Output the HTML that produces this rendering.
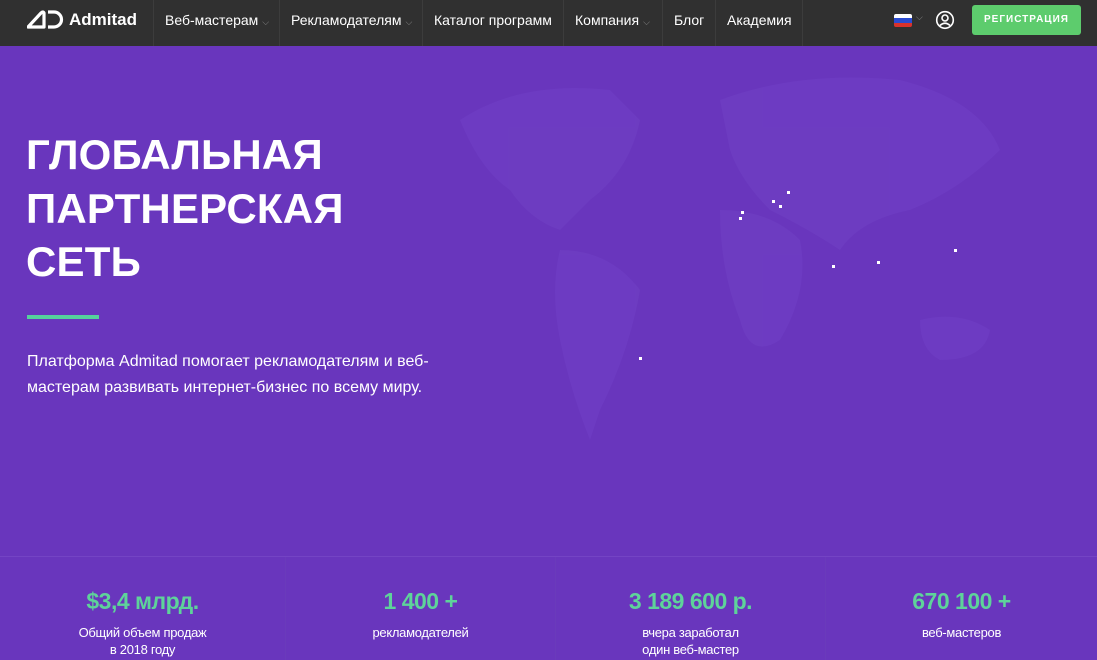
<!DOCTYPE html>
<html><head><meta charset="utf-8"><style>
*{margin:0;padding:0;box-sizing:border-box}
body{width:1097px;height:659px;overflow:hidden;background:#6936bd;font-family:"Liberation Sans","Noto Sans CJK SC",sans-serif;position:relative}
.nav{position:absolute;top:0;left:0;width:1097px;height:46px;background:#303030;color:#fff}
.nav .it{position:absolute;top:0;height:46px;line-height:40px;font-size:14px;border-left:1px solid #3c3c3c;padding-left:11px}
.chev{color:#888;font-size:9px;margin-left:4px}
.logo{position:absolute;left:27px;top:9px;font-weight:bold;font-size:17px;line-height:22px}
.btn{position:absolute;left:972px;top:5px;width:109px;height:30px;background:#5dcc6d;border-radius:3px;color:#fff;font-size:10px;font-weight:bold;letter-spacing:1px;text-align:center;line-height:30px}
h1{position:absolute;left:26px;top:128px;color:#fff;font-size:42px;line-height:53.5px;font-weight:bold;letter-spacing:0.2px}
.bar{position:absolute;left:27px;top:315px;width:72px;height:4px;background:#55d19c}
p.d{position:absolute;left:27px;top:349px;color:#fff;font-size:16px;line-height:26px;width:420px}
.stats{position:absolute;top:556px;left:0;width:1097px;height:103px;border-top:1px solid #7444c4}
.st{position:absolute;top:0;height:103px;text-align:center;border-left:1px solid #6a3bbb}
.st b{display:block;margin-top:29px;color:#5ed39a;font-size:23px;line-height:30px;letter-spacing:-0.5px}
.st span{display:block;margin-top:8px;color:#fff;font-size:13px;line-height:17px;letter-spacing:-0.3px}
.dot{position:absolute;width:3px;height:3px;background:#fff}
</style></head><body>
<svg style="position:absolute;left:440px;top:60px" width="580" height="400" viewBox="0 0 580 400">
<g fill="#7040c4" opacity="0.6">
<path d="M20 60 Q80 20 170 30 L200 60 Q190 110 150 140 L120 170 Q90 160 70 130 Q40 110 20 60Z"/>
<path d="M120 190 Q170 190 200 230 Q190 290 160 350 L150 380 Q130 330 120 280 Q110 230 120 190Z"/>
<path d="M280 40 Q360 10 460 20 Q540 40 560 90 Q520 130 470 150 Q420 160 400 190 Q370 170 330 150 Q300 120 290 90Z"/>
<path d="M280 150 Q330 150 360 180 Q370 230 340 280 Q310 300 300 260 Q280 210 280 150Z"/>
<path d="M480 260 Q520 250 550 270 Q545 300 500 300 Q480 290 480 260Z"/>
</g></svg>
<div class="dot" style="left:787px;top:191px"></div>
<div class="dot" style="left:772px;top:200px"></div>
<div class="dot" style="left:779px;top:205px"></div>
<div class="dot" style="left:741px;top:211px"></div>
<div class="dot" style="left:739px;top:217px"></div>
<div class="dot" style="left:954px;top:249px"></div>
<div class="dot" style="left:877px;top:261px"></div>
<div class="dot" style="left:832px;top:265px"></div>
<div class="dot" style="left:639px;top:357px"></div>
<div class="nav">
<div class="logo"><svg width="38" height="20" viewBox="0 0 38 20" style="vertical-align:-4px;margin-right:4px"><path d="M1 18 L14 4 Q16 2 17 4 L17 18 Z" fill="none" stroke="#fff" stroke-width="3.2" stroke-linejoin="round"/><path d="M21 3 L27 3 A7.5 7.5 0 0 1 27 18 L21 18" fill="none" stroke="#fff" stroke-width="3.2"/></svg>Admitad</div>
<div class="it" style="left:153px;width:126px">Веб-мастерам<span class="chev">⌵</span></div>
<div class="it" style="left:279px;width:143px">Рекламодателям<span class="chev">⌵</span></div>
<div class="it" style="left:422px;width:141px">Каталог программ</div>
<div class="it" style="left:563px;width:99px">Компания<span class="chev">⌵</span></div>
<div class="it" style="left:662px;width:53px">Блог</div>
<div class="it" style="left:715px;width:88px;border-right:1px solid #3c3c3c">Академия</div>
<div style="position:absolute;left:894px;top:14px;width:18px;height:13px;border-radius:2px;overflow:hidden"><div style="height:4px;background:#fff"></div><div style="height:5px;background:#2a4bd0"></div><div style="height:4px;background:#d8322c"></div></div>
<span style="position:absolute;left:916px;top:12px;color:#888;font-size:9px">⌵</span>
<svg style="position:absolute;left:935px;top:10px" width="20" height="20" viewBox="0 0 20 20" fill="none" stroke="#fff" stroke-width="1.6"><circle cx="10" cy="10" r="8.3"/><circle cx="10" cy="8" r="3"/><path d="M5 15.5 Q10 11 15 15.5"/></svg>
<div class="btn">РЕГИСТРАЦИЯ</div>
</div>
<h1>ГЛОБАЛЬНАЯ<br>ПАРТНЕРСКАЯ<br>СЕТЬ</h1>
<div class="bar"></div>
<p class="d">Платформа Admitad помогает рекламодателям и веб-мастерам развивать интернет-бизнес по всему миру.</p>
<div class="stats">
<div class="st" style="left:0;width:285px;border-left:none"><b>$3,4 млрд.</b><span>Общий объем продаж<br>в 2018 году</span></div>
<div class="st" style="left:285px;width:270px"><b>1 400 +</b><span>рекламодателей</span></div>
<div class="st" style="left:555px;width:270px"><b>3 189 600 р.</b><span>вчера заработал<br>один веб-мастер</span></div>
<div class="st" style="left:825px;width:272px"><b>670 100 +</b><span>веб-мастеров</span></div>
</div>
</body></html>
